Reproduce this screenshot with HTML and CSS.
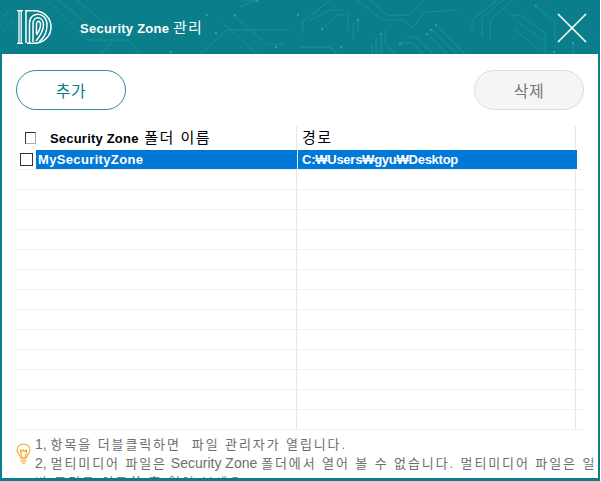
FILE: index.html
```html
<!DOCTYPE html>
<html lang="ko">
<head>
    <meta charset="UTF-8">
    <title>Security Zone 관리</title>
    <link rel="stylesheet" href="styles.css">
</head>
<body>
    <div class="window">
        <!-- 상단 바 -->
        <div class="titlebar">
            <svg class="circuit" width="600" height="54" viewBox="0 0 600 54" fill="none" stroke="#2aa5ad" stroke-width="1">
                <path d="M0 33 L14 20 M0 20 L10 10 M47 0 L87 40 H113 M58 0 L100 34 H128 M77 0 L112 30 M100 54 L114 40 H128 L140 54 M200 54 L227 30 H290 M223 23 L257 54 M233 15 L267 44 H283 M240 0 L256 0 M257 0 L240 7"/>
                <path d="M303 33 V22 L330 0 M310 20 L330 10 H343 M322 29 L337 15 H345 M348 12 V30 M353 23 V40 M358 20 V33 M357 0 L382 20 H403 L413 28 L425 12 L457 10 M370 0 L387 15 H410 L423 0 M300 47 H330 L337 54 M400 43 H413 L423 54 M407 37 H417 L433 54 M372 45 V54 M376 38 V54 M381 33 V54 M385 30 V43 L395 54 M427 33 L447 54 M431 29 L457 54 M436 25 L465 54"/>
                <path d="M472 30 V20 L497 0 M482 37 V18 L503 0 M490 40 V20 L513 0 M510 15 H520 L545 33 V54 M513 28 L540 50 M518 22 L543 40 M536 6 L555 22 V40"/>
                <path d="M573 43 V54" stroke="#2aa5ad"/>
                <path d="M533 0 H545 L560 14 M570 30 L600 54 M580 24 L600 40" stroke-opacity="0.5"/>
                <g fill="#2fd0d6" stroke="none">
                    <rect x="206" y="14" width="2" height="2"/><rect x="234" y="14" width="2" height="2"/><rect x="297" y="14" width="2" height="2"/>
                    <rect x="215" y="32" width="2" height="2"/><rect x="170" y="51" width="2" height="2"/><rect x="275" y="46" width="2" height="2"/>
                    <rect x="321" y="28" width="2" height="2"/><rect x="357" y="19" width="2" height="2"/><rect x="380" y="33" width="2" height="2"/>
                    <rect x="340" y="46" width="2" height="2"/><rect x="399" y="43" width="2" height="2"/><rect x="426" y="33" width="2" height="2"/>
                    <rect x="430" y="29" width="2" height="2"/><rect x="435" y="24" width="2" height="2"/><rect x="535" y="5" width="2" height="2"/>
                    <rect x="572" y="42" width="2" height="2"/><rect x="553" y="51" width="2" height="2"/><rect x="256" y="0" width="2" height="2"/>
                </g>
            </svg>
            <svg class="logo" width="35" height="35" viewBox="0 0 35 35" fill="none" stroke="#fff">
                <path stroke-width="1.3" d="M0 .7 H6 M0 33.3 H6 M2 1 V33 M4.2 1 V33"/>
                <path stroke-width="1.5" d="M8 .8 H17 C27 .8 34 8 34 17 C34 26 27 33.2 17 33.2 H10 M9 1 V33"/>
                <path stroke-width="1.5" d="M12.5 33 V13 C12.5 1 30 1 30 15 C30 22 27 28 22 32"/>
                <path stroke-width="1.5" d="M16 32 V14 C16 5 26.5 6 26.5 15 C26.5 21 23 26 19 31"/>
                <path stroke-width="1.5" d="M19.5 24 V15 C19.5 10 23.5 10 23.5 15 C23.5 19 21.5 22 19.5 25"/>
            </svg>
            <div class="title">Security Zone <span class="ko">관리</span></div>
            <svg class="close" width="30" height="32" viewBox="0 0 30 32" stroke="#fff" stroke-width="1.6">
                <path d="M1 3 L29 31 M29 3 L1 31"/>
            </svg>
        </div>

        <div class="content">
            <div class="buttons">
                <button type="button" class="btn btn-add">추가</button>
                <button type="button" class="btn btn-del">삭제</button>
            </div>

            <!-- 목록 -->
            <div class="list">
                <div class="row head">
                    <div class="col-check"><span class="check check-head"></span></div>
                    <div class="col-name"><b>Security Zone</b> <span class="ko">폴더 이름</span></div>
                    <div class="col-path"><span class="ko">경로</span></div>
                    <div class="col-rest"></div>
                </div>
                <div class="row selected">
                    <div class="col-check"><span class="check"></span></div>
                    <div class="col-name"><b>MySecurityZone</b></div>
                    <div class="col-path"><b>C:₩Users₩gyu₩Desktop</b></div>
                    <div class="col-rest"></div>
                </div>
                <div class="row"><div class="col-check"></div><div class="col-name"></div><div class="col-path"></div><div class="col-rest"></div></div>
                <div class="row"><div class="col-check"></div><div class="col-name"></div><div class="col-path"></div><div class="col-rest"></div></div>
                <div class="row"><div class="col-check"></div><div class="col-name"></div><div class="col-path"></div><div class="col-rest"></div></div>
                <div class="row"><div class="col-check"></div><div class="col-name"></div><div class="col-path"></div><div class="col-rest"></div></div>
                <div class="row"><div class="col-check"></div><div class="col-name"></div><div class="col-path"></div><div class="col-rest"></div></div>
                <div class="row"><div class="col-check"></div><div class="col-name"></div><div class="col-path"></div><div class="col-rest"></div></div>
                <div class="row"><div class="col-check"></div><div class="col-name"></div><div class="col-path"></div><div class="col-rest"></div></div>
                <div class="row"><div class="col-check"></div><div class="col-name"></div><div class="col-path"></div><div class="col-rest"></div></div>
                <div class="row"><div class="col-check"></div><div class="col-name"></div><div class="col-path"></div><div class="col-rest"></div></div>
                <div class="row"><div class="col-check"></div><div class="col-name"></div><div class="col-path"></div><div class="col-rest"></div></div>
                <div class="row"><div class="col-check"></div><div class="col-name"></div><div class="col-path"></div><div class="col-rest"></div></div>
                <div class="row"><div class="col-check"></div><div class="col-name"></div><div class="col-path"></div><div class="col-rest"></div></div>
                <div class="row"><div class="col-check"></div><div class="col-name"></div><div class="col-path"></div><div class="col-rest"></div></div>
            </div>

            <!-- 안내 문구 -->
            <div class="notice">
                <svg class="bulb" width="15" height="22" viewBox="0 0 15 22" fill="none" stroke="#f5a623" stroke-width="1.1">
                    <path d="M4.5 14.5 C4.5 12 1 10.5 1 7 C1 3.5 4 1 7.5 1 C11 1 14 3.5 14 7 C14 10.5 10.5 12 10.5 14.5 Z"/>
                    <path d="M5.5 14 L4.5 7 L6.5 8.5 L7.5 7 L8.5 8.5 L10.5 7 L9.5 14"/>
                    <path d="M4.5 16 H10.5 M4.5 18 H10.5 M5.5 20 H9.5"/>
                </svg>
                <div class="notice-text">1, <span class="ko">항목을 더블클릭하면&nbsp; 파일 관리자가 열립니다.</span><br>2, <span class="ko">멀티미디어 파일은</span> Security Zone <span class="ko">폴더에서 열어 볼 수 없습니다. 멀티미디어 파일은 일</span><br><span class="ko">반 폴더로 이동한 후 열어 보세요.</span></div>
            </div>
        </div>
    </div>
</body>
</html>
```

FILE: styles.css
```css
/* 기본 스타일 */
html, body {
    margin: 0;
    padding: 0;
    background-color: #fff;
}

body {
    font-family: 'Liberation Sans', 'Noto Sans CJK KR', sans-serif;
    color: #000;
    font-size: 13px;
    overflow: hidden;
}

.window {
    width: 600px;
    height: 481px;
    box-sizing: border-box;
    border: solid #0a7e8a;
    border-width: 0 2px 3px 2px;
    display: flex;
    flex-direction: column;
    overflow: hidden;
}

/* 상단 바 */
.titlebar {
    position: relative;
    flex: none;
    height: 54px;
    margin: 0 -2px;
    background-color: #0a7e8a;
    display: flex;
    align-items: center;
    padding-left: 17px;
    color: #fff;
    overflow: hidden;
}

.circuit {
    position: absolute;
    left: 0;
    top: 0;
    opacity: 0.5;
}

.logo {
    position: relative;
}

.title {
    position: relative;
    margin-left: 28px;
    margin-top: -1px;
    font-size: 13px;
    font-weight: bold;
    letter-spacing: 0.25px;
    flex: 1;
}

.title .ko {
    font-weight: normal;
    font-size: 15px;
    letter-spacing: 1px;
}

.close {
    position: relative;
    margin-right: 13px;
}

.content {
    flex: 1;
    min-height: 0;
    padding: 16px 14px 0 14px;
}

.buttons {
    display: flex;
    justify-content: space-between;
    height: 40px;
}

.btn {
    width: 110px;
    height: 40px;
    border-radius: 20px;
    font-family: 'Noto Sans CJK KR', sans-serif;
    font-size: 16px;
    letter-spacing: 0.5px;
    background-color: #fff;
    padding: 0;
}

.btn-add {
    border: 1px solid #2b8c96;
    color: #0a7e8a;
}

.btn-del {
    border: 1px solid #dcdcdc;
    background-color: #f5f5f5;
    color: #777;
}

/* 목록 */
.list {
    margin-top: 16px;
    width: 568px;
}

.row {
    display: flex;
    height: 19px;
    border-bottom: 1px solid #f0f0f0;
    align-items: stretch;
    line-height: 19px;
}

.head {
    height: 24px;
    line-height: 24px;
    border-bottom: 0;
}

.head b {
    letter-spacing: 0.2px;
}

.head .ko {
    font-size: 15px;
    letter-spacing: 1.5px;
}

.head .col-name .ko {
    margin-left: 2px;
}

.col-check {
    width: 20px;
    flex: none;
    display: flex;
    align-items: center;
    padding-left: 4px;
    box-sizing: border-box;
}

.col-name {
    width: 258px;
    flex: none;
    padding-left: 2px;
    border-right: 1px solid #e6e6e6;
    white-space: nowrap;
}

.col-path {
    width: 279px;
    flex: none;
    box-sizing: border-box;
    padding-left: 5px;
    border-right: 1px solid #e6e6e6;
    white-space: nowrap;
}

.col-rest {
    flex: 1;
}

.head .col-name {
    padding-left: 14px;
    width: 246px;
}

.head .col-check {
    padding-left: 9px;
}

.selected {
    color: #fff;
}

.selected .col-name,
.selected .col-path {
    background-color: #0078d7;
}

.selected .col-name {
    border-right: 0;
    width: 259px;
    letter-spacing: 0.35px;
}

.selected .col-path {
    border-right: 0;
    width: 280px;
    box-shadow: inset 1px 0 0 #e6e6e6;
    padding-left: 5px;
    letter-spacing: -0.25px;
}

.check {
    display: block;
    width: 11px;
    height: 11px;
    border: 1px solid #333;
    background-color: #fff;
}

.check-head {
    width: 10px;
    height: 10px;
    border-color: #333 #aaa #aaa #333;
}

/* 안내 문구 */
.notice {
    display: flex;
    align-items: flex-start;
    margin-top: 5px;
    color: #6e6e6e;
    width: 570px;
}

.bulb {
    flex: none;
    margin-top: 8px;
    margin-right: 4px;
    flex-shrink: 0;
}

.notice-text {
    font-size: 14px;
    line-height: 19px;
    white-space: nowrap;
}

.notice-text .ko {
    font-size: 13px;
    letter-spacing: 1.9px;
}
```
